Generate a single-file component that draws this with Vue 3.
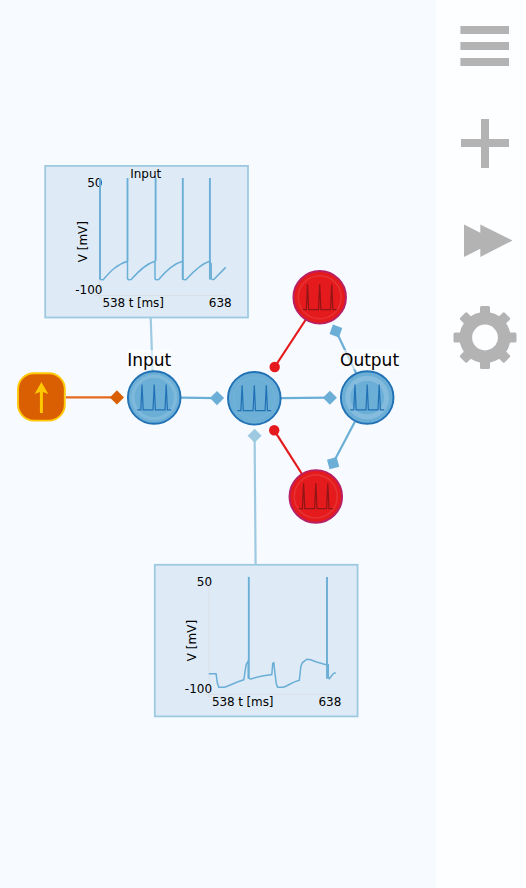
<script setup>
const spikes = 'M-17 12.3H-13.4L-12.2 -13L-11 12.3H-1.2L0 -13L1.2 12.3H10.8L12 -13L13.2 12.3H17'

const neurons = [
  { x: 154.2, y: 397.5, kind: 'exc', ring: 21.3, width: 3.4, glow: 0.13 },
  { x: 254.3, y: 398.3, kind: 'exc', ring: 20.5, width: 1.5, glow: 0.06 },
  { x: 367.2, y: 397.5, kind: 'exc', ring: 19.3, width: 5, glow: 0.18 },
  { x: 319.7, y: 297.3, kind: 'inh', ring: 21.5, width: 1.6, glow: 0.1 },
  { x: 315.8, y: 496.4, kind: 'inh', ring: 21.5, width: 1.6, glow: 0.1 },
]

const links = [
  { kind: 'gen', x1: 66, y1: 397.4, x2: 117, y2: 397.4 },
  { kind: 'exc', x1: 181, y1: 397.6, x2: 217, y2: 398.2 },
  { kind: 'exc', x1: 281, y1: 398.2, x2: 330, y2: 397.7 },
  { kind: 'exc', x1: 356, y1: 373, x2: 336, y2: 331 },
  { kind: 'exc', x1: 355, y1: 421.5, x2: 333, y2: 463.2 },
  { kind: 'rec', x1: 255.6, y1: 565, x2: 254.6, y2: 435.8 },
]

const diamonds = [
  { kind: 'gen', x: 116.9, y: 397.4, a: 45 },
  { kind: 'exc', x: 217, y: 398.1, a: 45 },
  { kind: 'exc', x: 329.9, y: 397.7, a: 45 },
  { kind: 'exc', x: 335.9, y: 331, a: 20 },
  { kind: 'exc', x: 333.1, y: 463.2, a: -15 },
  { kind: 'rec', x: 254.6, y: 435.8, a: 45 },
]

const charts = [
  {
    x: 45.2, y: 165.9, title: 'Input', bars: [[54.8, 113.6], [82.3, 95], [110.4, 95], [137.6, 113.6], [164.7, 113.6]],
    trace: 'M54.8 113.6L58 113.8C63 108 70 99 82.3 95.3V113L83.5 113.8L86 113.6C92 107 100 98 109.8 95.3V113L111 113.8L113.5 113.6C119 107 127 98 137.4 95.3V113L139 113.8L141 113.6C147 107 155 98 164.5 95.3L166 98V113L167.5 113.8L169 113.2L180.5 101.5',
  },
  {
    x: 154.8, y: 564.8, title: '', bars: [[94, 114], [172.2, 114]],
    trace: 'M54 109H61.3L62.5 118L64 122.5H69.5C75 121 79 118 89 115L90.5 105L91.5 99.5L93.5 96V113L96 114.3C101 112.5 103 112 109 111L117 109.8L118 98.5L119 98L120 107L121.5 119L122.8 122.5H128.5C134 120.5 137 117.5 144.5 115.5L146 102L147.5 98L152 94.4L156 95L161 97L172 100.2L173.5 100V112.5L174.5 114L178 109.5L179.5 108.2H181',
  },
]
</script>

<template>
  <main class="app">
    <svg class="canvas" viewBox="0 0 436 888">
      <line class="link rec" x1="150.7" y1="318" x2="152.6" y2="372" />
      <line v-for="(l, i) in links" :key="'l' + i" class="link" :class="l.kind" :x1="l.x1" :y1="l.y1" :x2="l.x2" :y2="l.y2" />
      <line class="link inh" x1="305.5" y1="320" x2="274.7" y2="367" />
      <line class="link inh" x1="302" y1="474" x2="274.2" y2="430.3" />
      <circle class="dot" cx="274.7" cy="367" r="5.2" />
      <circle class="dot" cx="274.2" cy="430.3" r="5.2" />
      <rect v-for="(d, i) in diamonds" :key="'d' + i" class="tip" :class="d.kind" x="-5" y="-5" width="10" height="10" :transform="`translate(${d.x} ${d.y}) rotate(${d.a})`" />
      <rect class="plate" x="127" y="350" width="44.5" height="19.5" />
      <rect class="plate" x="340" y="350" width="59" height="19.5" />

      <g>
        <rect class="generator" x="18" y="373.2" width="46.8" height="47.4" rx="16" />
        <path class="arrow-stem" d="M41.4 413V389" />
        <path class="arrow-head" d="M41.4 382L48.3 394L41.4 391.5L34.6 394Z" />
      </g>

      <g v-for="(n, i) in neurons" :key="'n' + i" class="neuron" :class="n.kind" :transform="`translate(${n.x} ${n.y})`">
        <circle class="body" r="26.3" />
        <circle class="ring" :r="n.ring" :stroke-width="n.width" :stroke-opacity="n.glow" />
        <path class="spikes" :d="spikes" />
      </g>

      <text class="label" x="127.2" y="366.3">Input</text>
      <text class="label" x="340" y="366.2">Output</text>

      <g v-for="(c, i) in charts" :key="'c' + i" class="chart" :transform="`translate(${c.x} ${c.y})`">
        <rect class="frame" width="202.8" height="151.6" />
        <path class="axis" d="M54.2 12V133M49 129.5H181V132" />
        <text x="42" y="21">50</text>
        <text x="30" y="128.1">-100</text>
        <text x="57.2" y="141.5" textLength="61.5">538 t [ms]</text>
        <text x="163.6" y="141.5">638</text>
        <text transform="translate(41.6 96.4) rotate(-90)">V [mV]</text>
        <text v-if="c.title" x="85" y="12">{{ c.title }}</text>
        <path class="trace" :d="c.trace" />
        <line v-for="b in c.bars" :key="b[0]" class="bar" :x1="b[0]" y1="12.1" :x2="b[0]" :y2="b[1]" />
      </g>
    </svg>

    <nav class="tools">
      <button class="tool" aria-label="Menu">
        <svg viewBox="-36 -36 72 72"><path d="M-24.6-20h48.6v8h-48.6zM-24.6-4h48.6v8h-48.6zM-24.6 12.1h48.6v8h-48.6z" /></svg>
      </button>
      <button class="tool" aria-label="Add">
        <svg viewBox="-36 -36 72 72"><path d="M-4-24h8v20h20v8h-20v21h-8v-21h-20v-8h20z" /></svg>
      </button>
      <button class="tool" aria-label="Forward">
        <svg viewBox="-36 -36 72 72"><path d="M-21-15.5L-4.7-7.3V-15.5L27.5 .6L-4.7 17V8.8L-21 17Z" /></svg>
      </button>
      <button class="tool" aria-label="Settings">
        <svg viewBox="-36 -36.5 72 72">
          <circle class="cog" r="19.2" />
          <rect v-for="k in 8" :key="k" x="-5" y="-31.5" width="10" height="9" rx="1.5" :transform="`rotate(${k * 45})`" />
        </svg>
      </button>
    </nav>
  </main>
</template>

<style>
body { margin: 0; }
</style>

<style scoped>
.app { display: flex; width: 526px; height: 888px; overflow: hidden; background: #f7fbff; font-family: "DejaVu Sans", sans-serif; }
.canvas { width: 436px; height: 888px; flex: none; }
.tools { width: 90px; box-sizing: border-box; padding: 10px 5px 0 13px; display: flex; flex-direction: column; gap: 25px; background: #fdfeff; }
.tool { width: 72px; height: 72px; padding: 0; border: 0; background: none; flex: none; }
.tool svg { display: block; width: 72px; height: 72px; fill: #b3b3b3; }
.tool .cog { fill: none; stroke: #b3b3b3; stroke-width: 12.6; }
.link { stroke-width: 2.2; }
.link.gen { stroke: #e3691c; }
.link.exc { stroke: #6baed6; }
.link.rec { stroke: #9ecae1; }
.link.inh { stroke: #e41a1c; }
.tip.gen { fill: #d95f02; }
.tip.exc { fill: #6baed6; }
.tip.rec { fill: #9ecae1; }
.dot { fill: #e41a1c; }
.plate { fill: #fff; fill-opacity: 0.6; }
.label { font-size: 17px; fill: #000; }
.generator { fill: #d95f02; stroke: #ffc90a; stroke-width: 1.9; }
.arrow-stem { stroke: #ffc800; stroke-width: 3; }
.arrow-head { fill: #ffc800; }
.body { stroke-width: 1.9; }
.ring { fill: none; stroke: #fff; }
.spikes { fill: none; stroke-width: 1.2; }
.exc .body { fill: #6baed6; stroke: #2171b5; }
.exc .spikes { stroke: #2171b5; }
.inh .body { fill: #e41a1c; stroke: #b82066; }
.inh .spikes { stroke: #8f1517; }
.frame { fill: #deebf7; stroke: #9ecae1; stroke-width: 1.8; }
.axis { fill: none; stroke: #d9dfe6; stroke-width: 1; }
.chart text { font-size: 12px; fill: #000; }
.trace { fill: none; stroke: #6baed6; stroke-width: 1.5; }
.bar { stroke: #6baed6; stroke-width: 1.9; }
</style>
